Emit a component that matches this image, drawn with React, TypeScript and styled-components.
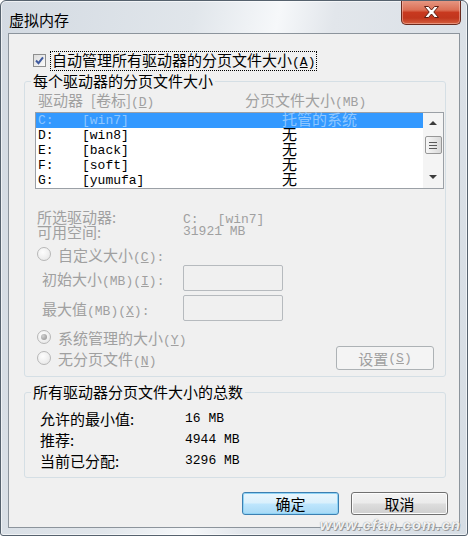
import styled, { createGlobalStyle } from "styled-components"

const CJK = `"Noto Sans CJK SC", "Liberation Sans", sans-serif`
const MONO = `"Liberation Mono", "DejaVu Sans Mono", monospace`
const GRAY = "#a0a0a0"

const GlobalStyle = createGlobalStyle`
  html, body { margin: 0; padding: 0; background: #fff; }
  body { width: 468px; height: 536px; overflow: hidden; }
  #root { width: 468px; height: 536px; }
`

type Drive = { letter: string; label: string; size: string }

const drives: Drive[] = [
  { letter: "C:", label: "[win7]", size: "托管的系统" },
  { letter: "D:", label: "[win8]", size: "无" },
  { letter: "E:", label: "[back]", size: "无" },
  { letter: "F:", label: "[soft]", size: "无" },
  { letter: "G:", label: "[yumufa]", size: "无" },
]

const totals = [
  { name: "允许的最小值:", value: "16 MB" },
  { name: "推荐:", value: "4944 MB" },
  { name: "当前已分配:", value: "3296 MB" },
]

export default function App() {
  return (
    <>
      <GlobalStyle />
      <Window>
        <TitleBar>
          <Title>虚拟内存</Title>
          <CloseButton>
            <svg width="15" height="12" viewBox="0 0 15 12">
              <path
                d="M0.5 0.5 H4.5 L7.5 4 L10.5 0.5 H14.5 L9.8 6 L14.5 11.5 H10.5 L7.5 8 L4.5 11.5 H0.5 L5.2 6 Z"
                fill="#fff"
                stroke="#5e1f14"
                strokeWidth="1"
                strokeLinejoin="round"
              />
            </svg>
          </CloseButton>
        </TitleBar>

        <Client>
          <CheckRow>
            <CheckBox>
              <svg width="11" height="11" viewBox="0 0 11 11">
                <path d="M2 5.5 L4.5 8.2 L9 2.3" fill="none" stroke="#3f5a9e" strokeWidth="2" />
              </svg>
            </CheckBox>
            <FocusLabel>
              自动管理所有驱动器的分页文件大小<M>(<u>A</u>)</M>
            </FocusLabel>
          </CheckRow>

          <Group $top={3}>
            <Legend>每个驱动器的分页文件大小</Legend>
            <GroupBody>
              <HeaderRow>
                <span>
                  驱动器<M> </M>[卷标]<M>(<u>D</u>)</M>
                </span>
                <span>
                  分页文件大小<M>(MB)</M>
                </span>
              </HeaderRow>

              <ListBox>
                <ListRows>
                  {drives.map((d, i) => (
                    <ListRow key={d.letter} $selected={i === 0}>
                      <M>{d.letter}</M>
                      <M>{d.label}</M>
                      <SizeCell>{d.size}</SizeCell>
                    </ListRow>
                  ))}
                </ListRows>
                <ScrollBar>
                  <Arrow $dir="up" />
                  <Thumb>
                    <Grip />
                  </Thumb>
                  <ScrollSpacer />
                  <Arrow $dir="down" />
                </ScrollBar>
              </ListBox>

              <InfoBlock>
                <InfoRow>
                  <span>所选驱动器:</span>
                  <span>
                    <M>C:</M>
                    <M style={{ marginLeft: 19 }}>[win7]</M>
                  </span>
                </InfoRow>
                <InfoRow>
                  <span>可用空间:</span>
                  <M>31921 MB</M>
                </InfoRow>
              </InfoBlock>

              <RadioRow $top={6}>
                <Radio />
                <span>
                  自定义大小<M>(<u>C</u>):</M>
                </span>
              </RadioRow>

              <InputRow $top={2}>
                <span>
                  初始大小<M>(MB)(<u>I</u>):</M>
                </span>
                <Field />
              </InputRow>
              <InputRow $top={4}>
                <span>
                  最大值<M>(MB)(<u>X</u>):</M>
                </span>
                <Field />
              </InputRow>

              <RadioRow $top={7}>
                <Radio $checked />
                <span>
                  系统管理的大小<M>(<u>Y</u>)</M>
                </span>
              </RadioRow>
              <RadioRow $top={0} $tall>
                <Radio />
                <span>
                  无分页文件<M>(<u>N</u>)</M>
                </span>
                <SettingsButton>
                  设置<M>(<u>S</u>)</M>
                </SettingsButton>
              </RadioRow>
            </GroupBody>
          </Group>

          <Group $top={6}>
            <Legend>所有驱动器分页文件大小的总数</Legend>
            <TotalsBody>
              {totals.map((t) => (
                <TotalRow key={t.name}>
                  <span>{t.name}</span>
                  <M>{t.value}</M>
                </TotalRow>
              ))}
            </TotalsBody>
          </Group>

          <ButtonRow>
            <DialogButton $default>确定</DialogButton>
            <DialogButton>取消</DialogButton>
          </ButtonRow>
        </Client>

        <Watermark>www.cfan.com.cn</Watermark>
      </Window>
    </>
  )
}

// окно целиком
const Window = styled.div`
  position: relative;
  box-sizing: border-box;
  width: 468px;
  height: 536px;
  display: flex;
  flex-direction: column;
  border: 1px solid #56626e;
  border-radius: 6px 6px 3px 3px;
  background: linear-gradient(100deg, #d3dae2 0%, #e1e6eb 35%, #f6f8fa 50%, #e2e6eb 60%, #d6dde4 100%);
  box-shadow: inset 0 0 0 1px rgba(255, 255, 255, 0.6);
  overflow: hidden;
  font-family: ${CJK};
  font-size: 15px;
  color: #000;
`

const TitleBar = styled.div`
  flex: none;
  height: 32px;
  display: flex;
  align-items: flex-start;
  justify-content: space-between;
`

const Title = styled.div`
  margin: 10px 0 0 8px;
  line-height: 18px;
`

const CloseButton = styled.div`
  box-sizing: border-box;
  width: 60px;
  height: 25px;
  margin: -1px 6px 0 0;
  display: flex;
  align-items: center;
  justify-content: center;
  border: 1px solid #6a2a1e;
  border-top: none;
  border-radius: 0 0 5px 5px;
  background: linear-gradient(180deg, #e79a86 0%, #db6f55 42%, #c8391f 52%, #c1361d 75%, #d5603f 100%);
  box-shadow: inset 0 0 0 1px rgba(255, 210, 200, 0.45);
`

const Client = styled.div`
  flex: 1;
  margin: 0 7px 7px 7px;
  padding: 0 11px 0 15px;
  display: flex;
  flex-direction: column;
  border: 1px solid #8c949c;
  background: #f0f0f0;
`

const M = styled.span`
  font-family: ${MONO};
  font-size: 13px;
`

const CheckRow = styled.div`
  height: 17px;
  margin-top: 18px;
  padding-left: 9px;
  display: flex;
  align-items: center;
`

const CheckBox = styled.span`
  box-sizing: border-box;
  width: 13px;
  height: 13px;
  display: flex;
  align-items: center;
  justify-content: center;
  border: 1px solid #8e8f8f;
  background: linear-gradient(135deg, #dcdcdc, #fbfbfb);
`

const FocusLabel = styled.span`
  margin-left: 4px;
  padding: 0 1px;
  line-height: 15px;
  border: 1px dotted #000;
  white-space: nowrap;
`

const Group = styled.fieldset<{ $top: number }>`
  margin: ${(p) => p.$top}px 2px 0 0;
  padding: 0;
  min-width: 0;
  border: 1px solid #d5dfe5;
  border-radius: 3px;
`

const Legend = styled.legend`
  margin-left: 6px;
  padding: 0 2px;
  line-height: 18px;
`

const GroupBody = styled.div`
  padding: 0 0 6px 10px;
  display: flex;
  flex-direction: column;
  color: ${GRAY};
`

const HeaderRow = styled.div`
  margin-top: 2px;
  height: 16px;
  line-height: 16px;
  padding-left: 3px;
  display: grid;
  grid-template-columns: 207px 1fr;
  white-space: pre;
`

const ListBox = styled.div`
  box-sizing: border-box;
  width: 409px;
  height: 77px;
  margin-top: 4px;
  display: flex;
  border: 1px solid #9ba0a6;
  background: #fff;
`

const ListRows = styled.div`
  flex: 1;
  display: flex;
  flex-direction: column;
`

const ListRow = styled.div<{ $selected?: boolean }>`
  height: 15px;
  line-height: 15px;
  padding-left: 2px;
  display: grid;
  grid-template-columns: 44px 200px 1fr;
  color: ${(p) => (p.$selected ? "#8fc7ff" : "#000")};
  background: ${(p) => (p.$selected ? "#3399ff" : "transparent")};
`

// CJK-колонка в списке, подтянута к базовой линии латиницы
const SizeCell = styled.span`
  margin-top: -2px;
`

const ScrollBar = styled.div`
  width: 20px;
  display: flex;
  flex-direction: column;
  align-items: center;
  background: #f4f4f4;
`

const Arrow = styled.div<{ $dir: "up" | "down" }>`
  height: 20px;
  width: 100%;
  display: flex;
  justify-content: center;
  align-items: ${(p) => (p.$dir === "up" ? "flex-start" : "flex-end")};
  padding: ${(p) => (p.$dir === "up" ? "8px 0 0" : "0 0 9px")};
  box-sizing: border-box;

  &::before {
    content: "";
    border-left: 4px solid transparent;
    border-right: 4px solid transparent;
    ${(p) => (p.$dir === "up" ? "border-bottom: 4px solid #3c3c3c;" : "border-top: 4px solid #3c3c3c;")}
  }
`

const Thumb = styled.div`
  box-sizing: border-box;
  width: 17px;
  height: 18px;
  margin-top: 3px;
  display: flex;
  align-items: center;
  justify-content: center;
  border: 1px solid #979797;
  border-radius: 2px;
  background: linear-gradient(90deg, #f6f6f6, #e8e8e8 50%, #d9d9d9);
`

const Grip = styled.div`
  width: 8px;
  height: 7px;
  background: repeating-linear-gradient(180deg, #5a5a5a 0 1px, transparent 1px 3px);
`

const ScrollSpacer = styled.div`
  flex: 1;
`

const InfoBlock = styled.div`
  margin-top: 20px;
`

const InfoRow = styled.div`
  height: 15px;
  line-height: 15px;
  padding-left: 2px;
  display: grid;
  grid-template-columns: 146px 1fr;
`

const RadioRow = styled.div<{ $top: number; $tall?: boolean }>`
  margin-top: ${(p) => p.$top}px;
  height: ${(p) => (p.$tall ? 24 : 18)}px;
  padding-left: 2px;
  display: flex;
  align-items: center;
  gap: 7px;
`

const Radio = styled.span<{ $checked?: boolean }>`
  box-sizing: border-box;
  flex: none;
  width: 14px;
  height: 14px;
  display: flex;
  align-items: center;
  justify-content: center;
  border: 1px solid #b7b7b7;
  border-radius: 50%;
  background: radial-gradient(circle at 40% 35%, #fdfdfd, #e4e4e4);

  &::after {
    content: "";
    width: 6px;
    height: 6px;
    border-radius: 50%;
    background: ${(p) =>
      p.$checked ? "radial-gradient(circle at 35% 35%, #d2d2d2, #8c8c8c)" : "transparent"};
  }
`

const InputRow = styled.div<{ $top: number }>`
  margin-top: ${(p) => p.$top}px;
  height: 26px;
  padding-left: 7px;
  display: grid;
  grid-template-columns: 141px 100px;
  align-items: center;
`

const Field = styled.div`
  box-sizing: border-box;
  height: 26px;
  border: 1px solid #b6babe;
  border-radius: 2px;
  background: #f0f0f0;
`

const SettingsButton = styled.div`
  box-sizing: border-box;
  width: 98px;
  height: 24px;
  margin: 0 11px 0 auto;
  display: flex;
  align-items: center;
  justify-content: center;
  border: 1px solid #adb2b5;
  border-radius: 3px;
  background: #f4f4f4;
  color: ${GRAY};
`

const TotalsBody = styled.div`
  padding: 7px 0 6px 15px;
`

const TotalRow = styled.div`
  height: 21px;
  line-height: 21px;
  display: grid;
  grid-template-columns: 145px 1fr;
`

const ButtonRow = styled.div`
  margin-top: 14px;
  display: flex;
  justify-content: flex-end;
  gap: 12px;
`

const DialogButton = styled.div<{ $default?: boolean }>`
  box-sizing: border-box;
  width: 97px;
  height: 23px;
  display: flex;
  align-items: center;
  justify-content: center;
  border: 1px solid ${(p) => (p.$default ? "#3c7fb1" : "#707070")};
  border-radius: 3px;
  background: ${(p) =>
    p.$default
      ? "linear-gradient(180deg, #eaf6fd 0%, #d9f0fc 48%, #bee6fd 52%, #a7d9f5 100%)"
      : "linear-gradient(180deg, #f2f2f2 0%, #ebebeb 48%, #dddddd 52%, #cfcfcf 100%)"};
  box-shadow: ${(p) =>
    p.$default ? "inset 0 0 0 1px #8fd3f5" : "inset 0 0 0 1px #fcfcfc"};
`

// водяной знак поверх рамки
const Watermark = styled.div`
  position: absolute;
  right: 6px;
  bottom: 2px;
  font-family: "Liberation Sans", sans-serif;
  font-size: 15px;
  font-weight: bold;
  font-style: italic;
  letter-spacing: 1px;
  color: #f2f2f2;
  text-shadow: 0 0 1px #808080, 1px 1px 0 #a0a0a0;
`
